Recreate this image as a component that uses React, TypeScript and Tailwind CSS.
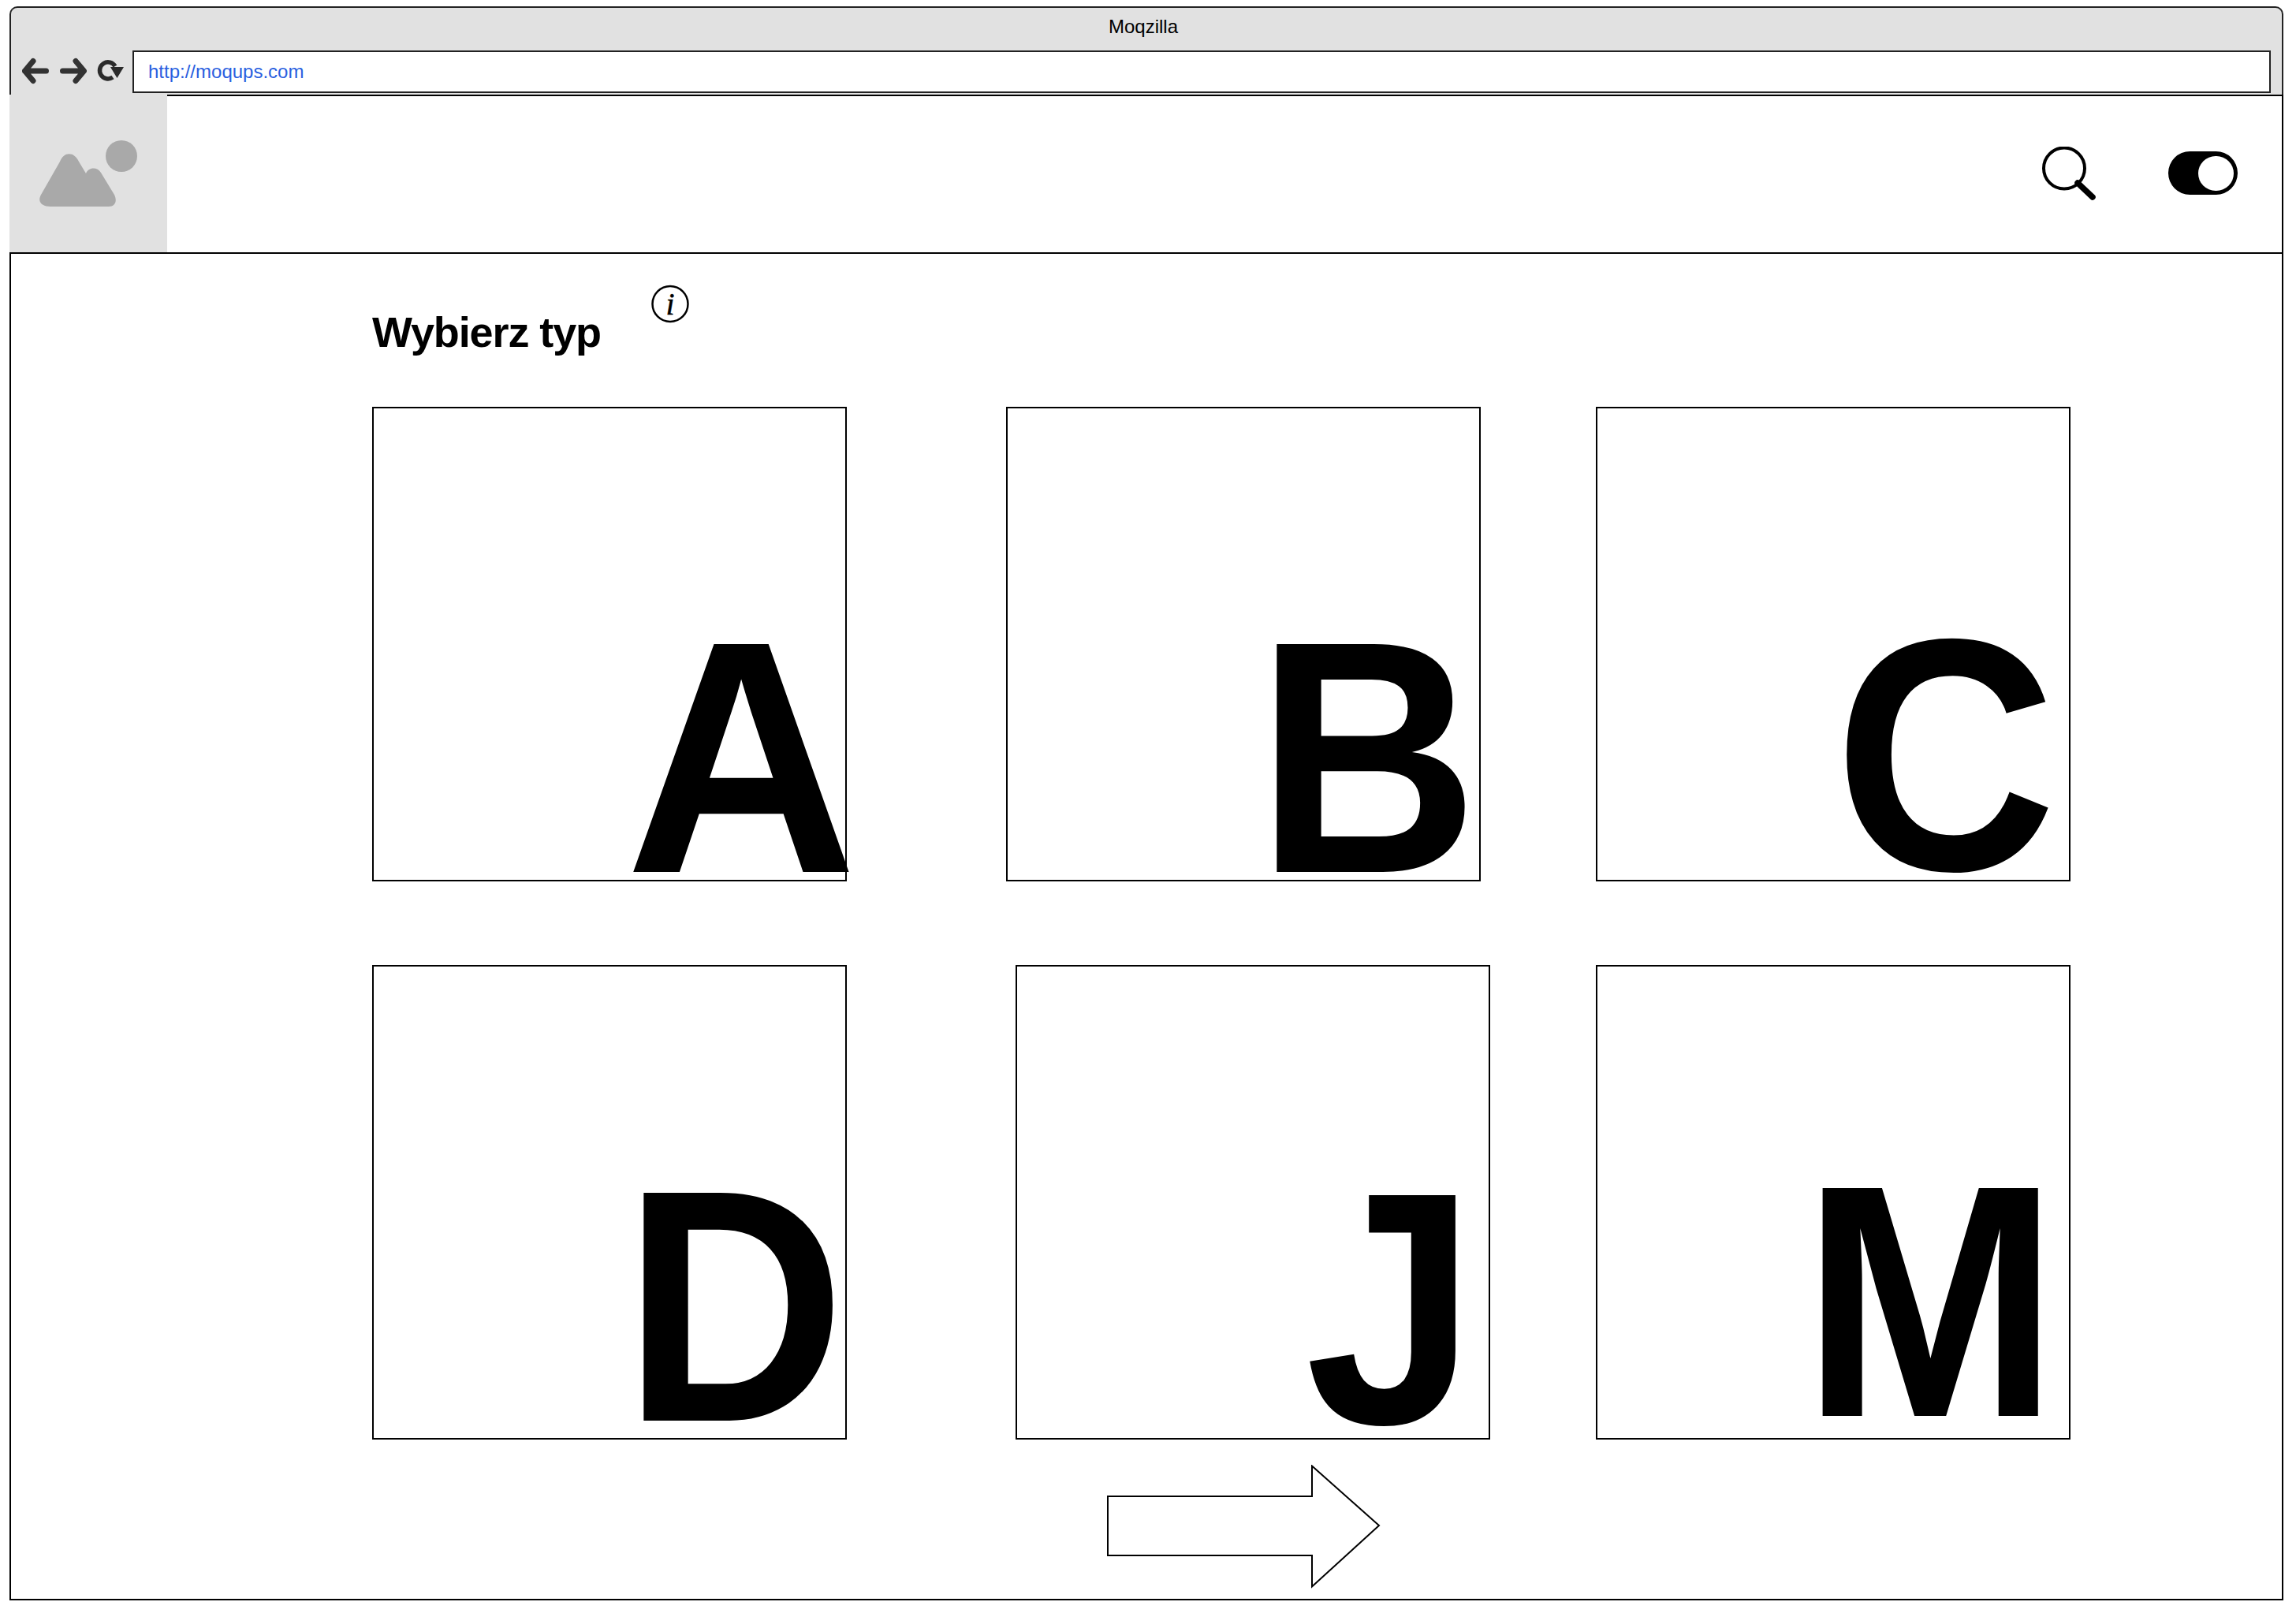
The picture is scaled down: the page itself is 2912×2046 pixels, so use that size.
const font = "font-['Liberation_Sans',Arial,sans-serif]";

function LetterBox({ letter, className, letterClass }: { letter: string; className: string; letterClass: string }) {
  return (
    <div className={`flex h-[602px] w-[602px] shrink-0 items-end justify-end border-2 border-black ${className}`}>
      <span className={`block text-[420px] leading-[290px] font-bold text-black origin-bottom-right ${letterClass}`}>{letter}</span>
    </div>
  );
}

export default function App() {
  return (
    <div className={`h-[2046px] w-[2912px] bg-white pt-[8px] pl-[12px] ${font}`}>
      <div className="flex h-[2022px] w-[2884px] flex-col">
        {/* browser chrome */}
        <div className="relative h-[112px] shrink-0 rounded-t-[10px] border-2 border-b-0 border-[#222] bg-[#e1e1e1]">
          <div className="pt-[10px] pr-[8px] pb-[2px] text-center text-[24px] leading-[28px] text-black">Moqzilla</div>
          <div className="mt-[14px] flex items-start pl-[14px] pr-[14px]">
            <svg width="140" height="36" viewBox="0 0 140 36" className="mt-[8px] shrink-0" fill="none">
              <g stroke="#333" strokeLinecap="round" strokeLinejoin="round" strokeWidth="7">
                <path d="M14 5.500 3.500 18 14 30.500M3.500 18H30.500" />
                <path d="M68 5.500 78.500 18 68 30.500M78 18H51.500" />
              </g>
              <path d="M118 12A10.500 10.500 0 1 0 115 26" stroke="#2b2b2b" strokeWidth="5.500" />
              <path d="M112 13h17l-8.500 14z" fill="#2b2b2b" />
            </svg>
            <div className="h-[54px] flex-1 border-2 border-[#222] bg-white pl-[18px] text-[24px] leading-[50px] text-[#2a5fe0]">http://moqups.com</div>
          </div>
        </div>
        {/* header */}
        <div className="flex h-[200px] shrink-0 items-stretch border-r-2 border-black">
          <div className="flex h-[200px] w-[200px] shrink-0 items-center justify-center bg-[#e1e1e1]">
            <svg width="124" height="86" viewBox="0 0 124 86" fill="#a9a9a9">
              <circle cx="104" cy="21" r="20" />
              <path d="M2 70 26 28C31 15 44 15 50 28L59 43C62 35 73 34 78 42L95 70C99 78 96 85 88 85H14C3 85-3 79 2 70Z" />
            </svg>
          </div>
          <div className="flex flex-1 items-center justify-end border-t-2 border-black pr-[56px]">
            <svg width="72" height="72" viewBox="0 0 72 72" fill="none" className="mt-[2px] mr-[88px]" stroke="#000">
              <circle cx="28" cy="27.500" r="26" strokeWidth="4" />
              <path d="M45 46 64 64" strokeWidth="7.500" strokeLinecap="round" />
            </svg>
            <div className="mb-[3px] flex h-[55px] w-[88px] items-center justify-end rounded-full bg-black pr-[5px]">
              <div className="h-[44px] w-[45px] rounded-full bg-white" />
            </div>
          </div>
        </div>
        {/* content */}
        <div className="flex h-[1710px] flex-col border-2 border-black border-t-2 pl-[458px]">
          <div className="relative h-[194px] shrink-0">
            <h1 className="pt-[68px] text-[54px] leading-[62px] font-bold tracking-[-1.1px] text-black">Wybierz typ</h1>
            <svg width="50" height="50" viewBox="0 0 50 50" className="absolute top-[38px] left-[353px]" fill="none">
              <circle cx="25" cy="25.500" r="22.500" stroke="#000" strokeWidth="2.500" />
              <text x="25" y="39" textAnchor="middle" fontFamily="'Liberation Serif',serif" fontStyle="italic" fontSize="40" fill="#000" stroke="#000" strokeWidth="0.500">i</text>
            </svg>
          </div>
          <div className="flex">
            <LetterBox letter="A" className="" letterClass="mr-[-15px] mb-[10px] scale-x-[0.97]" />
            <LetterBox letter="B" className="ml-[202px]" letterClass="mr-[1px] mb-[10px] scale-x-[0.93]" />
            <LetterBox letter="C" className="ml-[146px]" letterClass="mr-[16px] mb-[13px] scale-x-[0.93]" />
          </div>
          <div className="mt-[106px] flex">
            <LetterBox letter="D" className="" letterClass="mb-[22px] scale-x-[0.93]" />
            <LetterBox letter="J" className="ml-[214px]" letterClass="mr-[15px] mb-[19px] scale-x-[0.93]" />
            <LetterBox letter="M" className="ml-[134px]" letterClass="mr-[13px] mb-[28px] scale-x-[0.93]" />
          </div>
          <div className="mt-[32px] pl-[932px]">
            <svg width="350" height="160" viewBox="0 0 350 160" fill="#fff" stroke="#000" strokeWidth="2">
              <path d="M1 40H260V1.500L345 77 260 154.500V115H1Z" />
            </svg>
          </div>
        </div>
      </div>
    </div>
  );
}
